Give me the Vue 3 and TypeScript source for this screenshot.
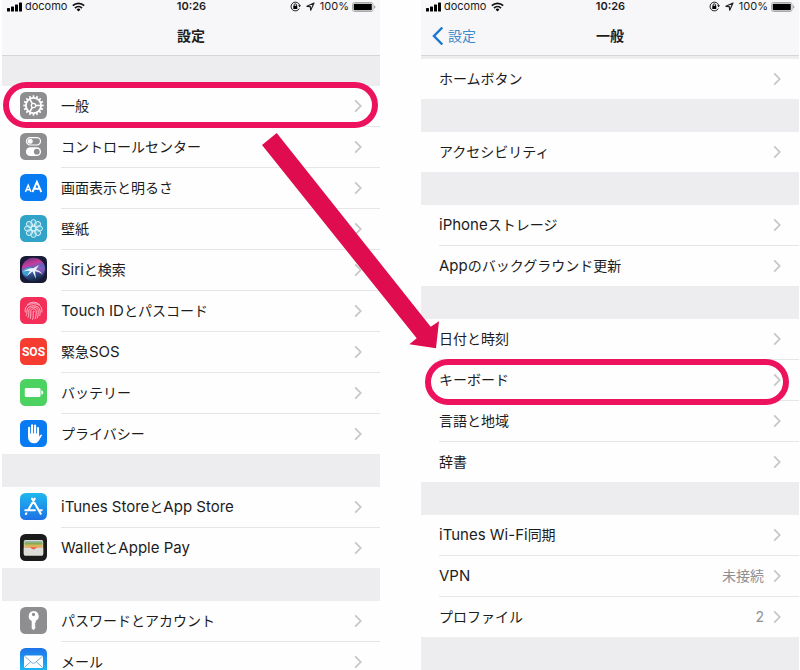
<script setup lang="ts">
interface Row {
  label: string
  icon?: string
  value?: string
  marked?: 'high' | 'low'
}

interface Panel {
  id: string
  title: string
  back?: string
  groups: Row[][]
}

interface Run {
  text: string
  latin: boolean
}

const panels: Panel[] = [
  {
    id: 'settings',
    title: '設定',
    groups: [
      [
        { label: '一般', icon: 'gear', marked: 'high' },
        { label: 'コントロールセンター', icon: 'control' },
        { label: '画面表示と明るさ', icon: 'display' },
        { label: '壁紙', icon: 'wallpaper' },
        { label: 'Siriと検索', icon: 'siri' },
        { label: 'Touch IDとパスコード', icon: 'touch' },
        { label: '緊急SOS', icon: 'sos' },
        { label: 'バッテリー', icon: 'battery' },
        { label: 'プライバシー', icon: 'privacy' },
      ],
      [
        { label: 'iTunes StoreとApp Store', icon: 'store' },
        { label: 'WalletとApple Pay', icon: 'wallet' },
      ],
      [
        { label: 'パスワードとアカウント', icon: 'key' },
        { label: 'メール', icon: 'mail' },
      ],
    ],
  },
  {
    id: 'general',
    title: '一般',
    back: '設定',
    groups: [
      [{ label: 'ホームボタン' }],
      [{ label: 'アクセシビリティ' }],
      [{ label: 'iPhoneストレージ' }, { label: 'Appのバックグラウンド更新' }],
      [
        { label: '日付と時刻' },
        { label: 'キーボード', marked: 'low' },
        { label: '言語と地域' },
        { label: '辞書' },
      ],
      [
        { label: 'iTunes Wi-Fi同期' },
        { label: 'VPN', value: '未接続' },
        { label: 'プロファイル', value: '2' },
      ],
    ],
  },
]

const teeth: number[] = Array.from({ length: 16 }, (_, i) => i * 22.5)
const petals: number[] = Array.from({ length: 8 }, (_, i) => i * 45)

// Latin letters are set one size above the Japanese around them.
function runs(label: string): Run[] {
  const parts = label.match(/[ -~]+|[^ -~]+/g) ?? []
  return parts.map((text) => ({ text, latin: /^[ -~]/.test(text) }))
}
</script>

<template>
  <main class="page">
    <section v-for="panel in panels" :key="panel.id" class="panel" :class="panel.id">
      <header class="header">
        <div class="status">
          <div class="status-side">
            <svg class="signal" width="15" height="10" viewBox="0 0 15 10" aria-hidden="true">
              <rect x="0" y="6" width="3" height="3.500" rx=".6" />
              <rect x="4" y="4.500" width="3" height="5" rx=".6" />
              <rect x="8" y="2.500" width="3" height="7" rx=".6" />
              <rect x="12" y="0.500" width="3" height="9" rx=".6" />
            </svg>
            <span class="carrier">docomo</span>
            <svg width="13" height="10" viewBox="0 0 13 10" aria-hidden="true">
              <g fill="none" stroke="#111" stroke-width="1.700">
                <path d="M.8 3.700a8.200 8.200 0 0 1 11.400 0" />
                <path d="M3 6.100a5 5 0 0 1 7 0" />
              </g>
              <path d="M4.600 7.500a2.700 2.700 0 0 1 3.800 0L6.500 9.600z" />
            </svg>
          </div>
          <span class="time">10:26</span>
          <div class="status-side end">
            <svg width="11" height="11" viewBox="0 0 11 11" aria-hidden="true">
              <path d="M9.300 7.600A4.400 4.400 0 1 1 9.700 4.500" fill="none" stroke="#222" stroke-width="1" />
              <path d="M8.100 4.200h2.800L9.700 6.200z" />
              <rect x="3.300" y="4.800" width="4" height="3.200" />
              <path d="M4.100 5V4a1.200 1.200 0 0 1 2.400 0v1" fill="none" stroke="#111" stroke-width=".9" />
            </svg>
            <svg class="locate" width="9" height="9" viewBox="0 0 9 9" aria-hidden="true">
              <path d="M8 1 .9 4.300l3.400.4.400 3.500z" fill="none" stroke="#222" stroke-width="1.200" stroke-linejoin="round" />
            </svg>
            <span class="percent">100%</span>
            <svg width="24" height="10" viewBox="0 0 24 10" aria-hidden="true">
              <rect x=".5" y=".5" width="20.500" height="9" rx="2" fill="#fff" stroke="#aaa" />
              <rect x="1.700" y="1.700" width="18.100" height="6.600" rx=".8" />
              <path d="M22 3.200q1.500.5 1.500 1.800T22 6.800z" fill="#aaa" />
            </svg>
          </div>
        </div>
        <div class="nav">
          <button v-if="panel.back" type="button" class="back">
            <svg width="12" height="20" viewBox="0 0 12 20" aria-hidden="true">
              <path d="M10.300 1.500 2 10l8.300 8.500" fill="none" stroke="#1b78d4" stroke-width="2.500" />
            </svg>
            <span>{{ panel.back }}</span>
          </button>
          <h1 class="title">{{ panel.title }}</h1>
        </div>
      </header>

      <ul v-for="(group, g) in panel.groups" :key="g" class="group">
        <li v-for="row in group" :key="row.label" class="item">
          <a href="#" class="row">
            <svg v-if="row.icon" class="icon" width="27" height="27" viewBox="0 0 27 27" aria-hidden="true">
              <g v-if="row.icon === 'gear'">
                <rect width="27" height="27" rx="5.500" fill="#8e8e91" />
                <g fill="none" stroke="#fff">
                  <circle cx="13.500" cy="13.500" r="7.600" stroke-width="1.900" />
                  <path v-for="t in teeth" :key="t" d="M13.500 3.300v2.500" stroke-width="1.700" :transform="`rotate(${t} 13.500 13.500)`" />
                  <circle cx="13.500" cy="13.500" r="2.200" stroke-width="1.200" />
                  <path d="M15.700 13.500H21M12.400 11.600 9.700 7M12.400 15.400 9.700 20" stroke-width="1.500" />
                </g>
              </g>
              <g v-else-if="row.icon === 'control'">
                <rect width="27" height="27" rx="5.500" fill="#8e8e91" />
                <rect x="6.500" y="4.700" width="14" height="7.300" rx="3.650" fill="none" stroke="#fff" stroke-width="1.200" />
                <circle cx="10.200" cy="8.350" r="2.500" fill="#fff" />
                <rect x="5.900" y="14.300" width="15.200" height="8.700" rx="4.350" fill="#fff" />
                <circle cx="16.800" cy="18.650" r="2.900" fill="#8e8e91" />
              </g>
              <g v-else-if="row.icon === 'display'">
                <rect width="27" height="27" rx="5.500" fill="#087bf2" />
                <g fill="none" stroke="#fff">
                  <path d="M5.400 18 8.200 11.200 11 18M6.300 15.800h3.800" stroke-width="1.400" />
                  <path d="M12.500 18 16.900 7.800 21.300 18M14 14.700h5.800" stroke-width="1.900" />
                </g>
              </g>
              <g v-else-if="row.icon === 'wallpaper'">
                <rect width="27" height="27" rx="5.500" fill="#32a3c8" />
                <g fill="#8bd2e8" fill-opacity=".3" stroke="#e7f8fc" stroke-width=".9">
                  <ellipse v-for="p in petals" :key="p" cx="13.500" cy="8" rx="2.700" ry="3.500" :transform="`rotate(${p} 13.500 13.500)`" />
                  <circle cx="13.500" cy="13.500" r="2.700" />
                </g>
              </g>
              <g v-else-if="row.icon === 'siri'">
                <defs>
                  <linearGradient id="siri-wave" x1="0" y1="0" x2="0.300" y2="1">
                    <stop offset="0" stop-color="#543177" />
                    <stop offset=".35" stop-color="#c63b9b" />
                    <stop offset=".58" stop-color="#516cc7" />
                    <stop offset="1" stop-color="#152d4b" />
                  </linearGradient>
                </defs>
                <rect width="27" height="27" rx="5.500" fill="#171b36" />
                <circle cx="13.500" cy="13.500" r="11.800" fill="url(#siri-wave)" />
                <path d="M2.200 15C7 10 12 11 13.500 13L6.500 20.500C3.500 19 2 17 2.200 15z" fill="#39b6d8" opacity=".75" />
                <path d="M13 13.500C18 9 23 10 25.200 12.500L22 19z" fill="#ac58c3" opacity=".6" />
                <path d="M3 15.700Q9 11.500 13.200 12.300L19 9l-3 4.500q4 1 6.500 4.500-4-2.500-7.500-2.700L16 23l-3.500-7.500L7 20l3-5q-3-.8-7 .7z" fill="#edf6ff" />
              </g>
              <g v-else-if="row.icon === 'touch'">
                <rect width="27" height="27" rx="5.500" fill="#f32f59" />
                <g fill="none" stroke="#ffc2ce" stroke-width=".9" stroke-linecap="round">
                  <path d="M7.500 7.500a8.500 8.500 0 0 1 12 0" />
                  <path d="M5.200 15c-.7-4 1.500-8.300 8.300-8.300s9 4.200 8.300 8.300" />
                  <path d="M6.300 18.500c.8-1.500.6-3 .6-4.500 0-7 13.200-7 13.200 0 0 1.500 0 3-.3 4.500" />
                  <path d="M8 20.500c1.200-2 .8-4.500.8-6.500 0-5 9.400-5 9.400 0 0 2.500 0 4.500-.8 6.800" />
                  <path d="M10.300 21.500c.8-2 .5-4.800.5-7.300 0-3 5.400-3 5.400 0 0 2.600 0 5-1 7.500" />
                  <path d="M12.600 22.200c.9-2 .6-4.800.6-7.800q.5-1 1 0" />
                </g>
              </g>
              <g v-else-if="row.icon === 'sos'">
                <rect width="27" height="27" rx="5.500" fill="#f63b31" />
                <text x="13.500" y="18" text-anchor="middle" class="sos">SOS</text>
              </g>
              <g v-else-if="row.icon === 'battery'">
                <rect width="27" height="27" rx="5.500" fill="#4cd261" />
                <rect x="4.800" y="9" width="15.700" height="9" rx="1.200" fill="#fff" />
                <path d="M21.300 11.300q2 .5 2 2.200t-2 2.200z" fill="#fff" />
              </g>
              <g v-else-if="row.icon === 'privacy'">
                <rect width="27" height="27" rx="5.500" fill="#087bf2" />
                <g stroke="#fff" stroke-width="2.100" stroke-linecap="round">
                  <path d="M9.100 7.800v8M12.100 5.400v9M15.100 5.600v9M18 8v8" />
                </g>
                <path d="M8.050 13.500h11v3l1.400-1.600q1.300-1 1.700.1L19 20.500q-1.600 2.700-4.800 2.700-5.200 0-6.100-5z" fill="#fff" />
              </g>
              <g v-else-if="row.icon === 'store'">
                <defs>
                  <linearGradient id="store-sky" x1="0" y1="0" x2="0" y2="1">
                    <stop offset="0" stop-color="#20b8ee" />
                    <stop offset="1" stop-color="#1d72e5" />
                  </linearGradient>
                </defs>
                <rect width="27" height="27" rx="5.500" fill="url(#store-sky)" />
                <g fill="none" stroke="#fff" stroke-width="2.100" stroke-linecap="round">
                  <path d="M14.700 5.700 8.100 17.200M12.100 5.700l8.600 15M6.300 20.300l-.4.700M5.300 17.200h9.600M18.700 17.200h3" />
                </g>
              </g>
              <g v-else-if="row.icon === 'wallet'">
                <rect width="27" height="27" rx="5.500" fill="#1b1b1b" />
                <rect x="3.800" y="6" width="19.400" height="15.500" rx="1.500" fill="#dedbd2" />
                <path d="M4.500 7h18v2h-18z" fill="#8fb9a8" />
                <path d="M4.500 8.600h18v2.200h-18z" fill="#8aa84e" />
                <path d="M4.500 10.800h18v2h-18z" fill="#d9b544" />
                <path d="M4.500 12.600h18v1.500h-18z" fill="#e9a06a" />
                <path d="M3.800 13.700h5.400q1 0 1.600.8 2.700 2.500 5.400 0 .6-.8 1.600-.8h5.400V20q0 1.500-1.500 1.500H5.300q-1.500 0-1.500-1.500z" fill="#deddd8" />
                <path d="M10.200 13.300h6.600q-3.300 4.300-6.600 0z" fill="#ed5e50" />
              </g>
              <g v-else-if="row.icon === 'key'">
                <rect width="27" height="27" rx="5.500" fill="#8e8e91" />
                <path fill-rule="evenodd" d="M13.500 4a5.200 5.200 0 0 1 2.200 9.900v1.800l-1.200 1 1.200 1.200-1.200 1.200 1.200 1.200-2 3-2-1.800v-7.600A5.200 5.200 0 0 1 13.500 4zm0 1.800a1.600 1.600 0 1 0 0 3.200 1.600 1.600 0 0 0 0-3.200z" fill="#fff" />
              </g>
              <g v-else-if="row.icon === 'mail'">
                <defs>
                  <linearGradient id="mail-sky" x1="0" y1="0" x2="0" y2="1">
                    <stop offset="0" stop-color="#1d73e8" />
                    <stop offset="1" stop-color="#20c4f4" />
                  </linearGradient>
                </defs>
                <rect width="27" height="27" rx="5.500" fill="url(#mail-sky)" />
                <rect x="4" y="7.500" width="19" height="12.500" rx="1.500" fill="#fff" />
                <path d="m4.500 8.300 7.700 6.600q1.300 1 2.600 0l7.700-6.600M4.500 19.300l6.200-5.600M22.500 19.300l-6.200-5.600" fill="none" stroke="#6ba5cf" stroke-width=".9" />
              </g>
            </svg>
            <span class="body">
              <span class="label"><span v-for="(run, r) in runs(row.label)" :key="r" :class="{ latin: run.latin }">{{ run.text }}</span></span>
              <span v-if="row.value" class="value">{{ row.value }}</span>
              <svg width="8" height="14" viewBox="0 0 8 14" aria-hidden="true">
                <path d="m1.200 1.400 5.500 5.600-5.500 5.600" fill="none" stroke="#c5c5c8" stroke-width="1.700" />
              </svg>
            </span>
          </a>
          <span v-if="row.marked" class="ring" :class="row.marked"></span>
        </li>
      </ul>
    </section>

    <svg class="arrow" width="178" height="216" viewBox="0 0 178 216" aria-hidden="true">
      <path d="M0 12 14.700 0 168.700 193.700l8.300-5.400-3 27-26.700-4 7.400-6z" fill="#e00c50" />
    </svg>
  </main>
</template>

<style>
body {
  background: #fefefe;
}
</style>

<style scoped>
.page {
  position: relative;
  display: grid;
  grid-template-columns: 1fr 1fr;
  column-gap: 41px;
  height: 100vh;
  padding: 0 1px 0 2px;
  box-sizing: border-box;
  overflow: hidden;
  font-family: Inter, "Noto Sans CJK JP", sans-serif;
  font-size: 14px;
  line-height: 20px;
  color: #1c1c1c;
}

.panel {
  background: #ededef;
}

.header {
  height: 56px;
  box-sizing: border-box;
  margin-bottom: 30px;
  border-bottom: 1px solid #d6d6d9;
  background: #f7f7f9;
}

.general .header {
  margin-bottom: 3px;
}

.status {
  display: grid;
  grid-template-columns: 1fr auto 1fr;
  align-items: center;
  height: 13px;
  padding: 0 4px 0 5px;
  font-size: 11px;
  line-height: 13px;
}

.status-side {
  display: flex;
  align-items: center;
}

.end {
  justify-content: flex-end;
}

.carrier {
  margin: 0 5px 0 3px;
}

.time {
  font-weight: 600;
}

.locate {
  margin: 0 5px;
}

.percent {
  margin-right: 3px;
}

.nav {
  display: grid;
  grid-template-columns: 1fr auto 1fr;
  align-items: center;
  height: 42px;
  padding: 4px 11px 0;
  box-sizing: border-box;
}

.title {
  grid-column: 2;
  margin: 0;
  font-size: 14px;
  line-height: 20px;
  font-weight: 700;
}

.back {
  grid-column: 1;
  justify-self: start;
  display: flex;
  align-items: center;
  gap: 4px;
  padding: 0;
  border: 0;
  background: none;
  font: inherit;
  color: #3b8cc9;
}

.group {
  margin: 0 0 33px;
  padding: 0;
  list-style: none;
  background: #fefefe;
}

.item {
  position: relative;
}

.row {
  display: flex;
  gap: 14px;
  padding-left: 18px;
  color: inherit;
  text-decoration: none;
}

.icon {
  flex: none;
  margin-top: 6px;
}

.body {
  flex: 1;
  display: flex;
  align-items: center;
  gap: 9px;
  height: 40px;
  padding-right: 18px;
  border-bottom: 1px solid #e6e6e8;
}

.item:last-child .body {
  border-bottom: 0;
}

.label {
  flex: 1;
}

.latin {
  font-size: 15px;
}

.value {
  color: #8e8e93;
}

.sos {
  font-family: Roboto, sans-serif;
  font-size: 12px;
  font-weight: 700;
  fill: #fff;
}

.ring {
  position: absolute;
  z-index: 1;
  height: 46px;
  box-sizing: border-box;
  border: 6px solid #ec125e;
  border-radius: 23px;
  pointer-events: none;
}

.high {
  top: -4px;
  left: 1px;
  right: 2px;
}

.low {
  top: -1px;
  left: 4px;
  right: 10px;
}

.arrow {
  position: absolute;
  top: 133px;
  left: calc(50% - 138px);
  pointer-events: none;
}
</style>
